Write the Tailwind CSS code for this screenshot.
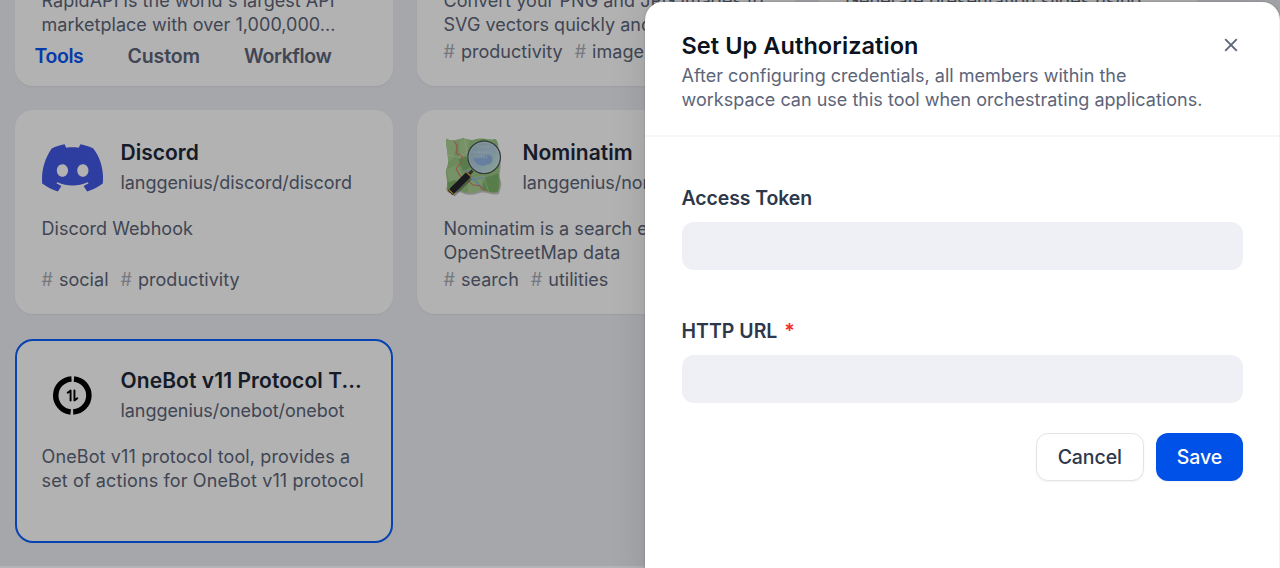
<!DOCTYPE html>
<html lang="en">
<head>
<meta charset="utf-8">
<title>Set Up Authorization</title>
<script src="https://cdn.jsdelivr.net/npm/@tailwindcss/browser@4"></script>
</head>
<body class="relative h-[568px] w-[1280px] overflow-hidden bg-[#edeff4] font-['Inter',sans-serif] text-[18px] leading-6 tracking-[0.03px] text-[#5c6579]">

<!-- Tool grid, scrolled down under the tabs -->
<main class="-mt-[118px] grid grid-cols-[377.5px_377.5px_377.5px] auto-rows-[204px] gap-x-[24.5px] gap-y-[24.3px] pl-[15px] whitespace-nowrap">
  <article class="flex flex-col rounded-[18px] bg-white px-[26.5px] pt-[106.5px] shadow-xs">
    <p>RapidAPI is the world's largest API<br>marketplace with over 1,000,000...</p>
  </article>
  <article class="flex flex-col rounded-[18px] bg-white px-[26.5px] pt-[106.5px] shadow-xs">
    <p>Convert your PNG and JPG images to<br>SVG vectors quickly and easily</p>
    <div class="mt-[3px] flex gap-3">
      <span class="flex gap-[6px]"><span class="text-[#a9adb6]">#</span>productivity</span>
      <span class="flex gap-[6px]"><span class="text-[#a9adb6]">#</span>image</span>
    </div>
  </article>
  <article class="flex flex-col rounded-[18px] bg-white px-[26.5px] pt-[106.5px] shadow-xs">
    <p>Generate presentation slides using</p>
  </article>

  <article class="flex flex-col rounded-[18px] bg-white px-[26.5px] pt-[26.5px] shadow-xs">
    <div class="flex h-20 gap-[18px]">
      <svg class="h-[61px] w-[61px]" viewBox="0 0 60 60">
        <path fill="#4358e6" d="M22.2 7.1c-4.6.8-8.700 2.200-12.700 4.100C2.500 21.500-.8 33.200.2 45.700c4.800 3.600 10 6.200 15.400 7.900l3.500-5.500-5-2.500 1.200-1c9.500 4.300 20 4.300 29.400 0l1.200 1-5 2.500 3.500 5.500c5.500-1.700 10.700-4.300 15.400-7.900 1.200-14.200-2.400-25.200-9.300-34.500-4-1.900-8.300-3.300-12.700-4.100l-1.700 3.400c-4.100-.6-8.200-.6-12.300 0zM20.100 39.200c-3 0-5.500-2.800-5.500-6.200s2.400-6.200 5.500-6.200 5.600 2.800 5.500 6.200c0 3.400-2.400 6.200-5.500 6.200zm20.100 0c-3 0-5.500-2.800-5.500-6.200s2.400-6.200 5.500-6.200 5.600 2.800 5.500 6.200c0 3.400-2.400 6.200-5.500 6.200z"/>
      </svg>
      <div class="pt-[2px]">
        <h3 class="text-[21px] leading-7 font-semibold text-[#1e293a]">Discord</h3>
        <p class="mt-1 tracking-[-0.05px]">langgenius/discord/discord</p>
      </div>
    </div>
    <p class="h-[51px]">Discord Webhook</p>
    <div class="flex gap-3">
      <span class="flex gap-[6px]"><span class="text-[#a9adb6]">#</span>social</span>
      <span class="flex gap-[6px]"><span class="text-[#a9adb6]">#</span>productivity</span>
    </div>
  </article>

  <article class="flex flex-col rounded-[18px] bg-white px-[26.5px] pt-[26.5px] shadow-xs">
    <div class="flex h-20 gap-[18px]">
      <svg class="h-[61px] w-[61px]" viewBox="0 0 60 60">
        <defs>
          <linearGradient id="lens" x1="0" y1="0" x2="1" y2="1"><stop offset="0" stop-color="#a3c5cb"/><stop offset=".5" stop-color="#b2cfe2"/><stop offset="1" stop-color="#c9ebd4"/></linearGradient>
          <clipPath id="map"><path d="M2.500 2C8 4.500 14 2.500 19 1c4 1 7 3 11 1.500 7-2.500 14 1 21-.5 4 5-1 11 2 17 4 7 0 13 1 20 3 6 0 11-1 15-8 2-12-3-19-1-6 2-11 3-17 0-5-2-10 2-15-1 3-8-1-13 0-20 3-6 2-12 1-18 0-5-2-8-.5-13z"/></clipPath>
        </defs>
        <path transform="translate(1 2)" fill="#000" opacity=".22" d="M2.500 2C8 4.500 14 2.500 19 1c4 1 7 3 11 1.500 7-2.500 14 1 21-.5 4 5-1 11 2 17 4 7 0 13 1 20 3 6 0 11-1 15-8 2-12-3-19-1-6 2-11 3-17 0-5-2-10 2-15-1 3-8-1-13 0-20 3-6 2-12 1-18 0-5-2-8-.5-13z"/>
        <g clip-path="url(#map)">
          <path fill="#9cc685" d="M0 0h60v60H0z"/>
          <path fill="#acd294" d="M0 0h13l-3 20-10 8zM15 3l10-2-2 18-8 5zM2 32l12-5 4 12-12 8zM25 40l14-2-4 16-12 2z"/>
          <path fill="#7fb46b" d="M25 10l14-9 6 5-12 12zM40 40l14-4v18l-12 2-4-6zM14 22l8-3 3 11-6 4zM3 45l8-3 4 9-11 4z"/>
          <path fill="none" stroke="#8fb6d4" stroke-width="1.600" d="M19 33c6 0 8 5 11 9s6 6 8 9M27 42c5 0 9-3 14-2"/>
          <path fill="none" stroke="#cf7c66" stroke-width="1.100" d="M10 4l3 5-1 7 6 3-1 6-5 6 3 6 4 5M24 43l4 4 7 1 6 6"/>
          <path fill="none" stroke="#d5e3bd" stroke-width=".5" d="M2 17l12 3 11-6M20 2l4 20M38 36l6 18"/>
        </g>
        <path stroke="#444" stroke-width="3" d="M28 33l-5 5"/>
        <path stroke="#000" stroke-opacity=".3" stroke-width="7" d="M25 39L8 56"/>
        <path stroke="#25262a" stroke-width="6.500" d="M24.500 36.500L6 55"/>
        <path stroke="#e1aa32" stroke-width="1.300" d="M22 34.500l4.500 4.500M4.500 51.500L9 56"/>
        <circle cx="39.500" cy="20" r="16" fill="url(#lens)" stroke="#50585a" stroke-width="1.300"/>
        <circle cx="39.500" cy="20" r="14.800" fill="none" stroke="#dcebea" stroke-width=".7" opacity=".7"/>
        <path fill="#88afe4" d="M29 21c5-3 8 0 12-3 5-2 8 2 6 7-2 3-5 1-7 3-5 1-10-2-11-7z" opacity=".8"/>
        <path d="M29 15h17M33 9.500h12M31 20h12" stroke="#d5e5ee" stroke-width="2" stroke-dasharray="1.500 1" opacity=".6"/>
      </svg>
      <div class="pt-[2px]">
        <h3 class="text-[21px] leading-7 font-semibold text-[#1e293a]">Nominatim</h3>
        <p class="mt-1 tracking-[-0.05px]">langgenius/nominatim</p>
      </div>
    </div>
    <p class="h-[51px]">Nominatim is a search engine for<br>OpenStreetMap data</p>
    <div class="flex gap-3">
      <span class="flex gap-[6px]"><span class="text-[#a9adb6]">#</span>search</span>
      <span class="flex gap-[6px]"><span class="text-[#a9adb6]">#</span>utilities</span>
    </div>
  </article>
  <div></div>

  <article class="flex flex-col rounded-[18px] border-2 border-[#0b60ff] bg-white px-[24.5px] pt-[24.5px]">
    <div class="flex h-20 gap-[18px]">
      <svg class="h-[61px] w-[61px]" viewBox="0 0 60 60">
        <g fill="none" stroke="#000">
          <path stroke-width="5.400" d="M29 13.700A16.300 16.300 0 0 0 28.200 46.200M31.400 13.700A16.300 16.300 0 0 1 30.700 46.200"/>
          <path stroke-width="1.900" stroke-linejoin="round" stroke-linecap="round" d="M25.300 27.300l2.800-2.100v9.800M31.900 25v9.800l2.800-2.100"/>
        </g>
      </svg>
      <div class="pt-[2px]">
        <h3 class="text-[21px] leading-7 font-semibold tracking-[0.08px] text-[#1e293a]">OneBot v11 Protocol T...</h3>
        <p class="mt-1 tracking-[-0.05px]">langgenius/onebot/onebot</p>
      </div>
    </div>
    <p class="tracking-[0.13px]">OneBot v11 protocol tool, provides a<br>set of actions for OneBot v11 protocol</p>
  </article>
</main>

<!-- Tabs float over the scrolled cards -->
<nav class="absolute top-[33px] left-0 flex h-[46px] items-center text-[19.5px] font-semibold tracking-normal">
  <span class="flex h-full w-[103px] items-center rounded-r-[12px] pl-[34.500px] tracking-[-0.4px] text-[#0b55f5]">Tools</span>
  <span class="w-[117px] pl-[24.5px] tracking-[-0.1px]">Custom</span>
  <span class="pl-6 tracking-[-0.4px]">Workflow</span>
</nav>

<div class="absolute inset-0 bg-black/30"></div>
<div class="absolute inset-x-0 bottom-0 h-[2px] bg-white/15"></div>

<!-- Authorization drawer -->
<aside class="absolute top-[1.5px] left-[644.5px] h-[590px] w-[635.5px] rounded-t-[18px] border-r border-[#f2f2f3] bg-white whitespace-nowrap shadow-[0_0_36px_rgba(0,0,0,0.12),0_0_2px_rgba(0,0,0,0.25)]">
  <header class="flex h-[135px] justify-between border-b-2 border-[#f7f7f8] pt-[28px] pr-[38px] pl-[37px]">
    <div>
      <h2 class="text-[23.5px] leading-8 font-semibold tracking-[0.08px] text-[#0b1220]">Set Up Authorization</h2>
      <p class="mt-[2px] tracking-[0.01px]">After configuring credentials, all members within the<br>workspace can use this tool when orchestrating applications.</p>
    </div>
    <svg class="mt-[5px] h-5 w-5" viewBox="0 0 20 20" fill="none" stroke="#5d667b" stroke-width="1.900"><path d="M4.200 4.200l11.600 11.600M15.800 4.200L4.200 15.800"/></svg>
  </header>
  <form class="pr-[36px] pl-[37px] pt-[47px] text-[19.5px] font-semibold tracking-normal text-[#2d384a]">
    <label class="block h-[38px] leading-7 tracking-[-0.1px]">Access Token</label>
    <div class="h-12 rounded-[12px] bg-[#eff0f5]"></div>
    <label class="mt-[47px] block h-[38px] leading-7">HTTP URL <span class="ml-[2px] text-[#f42c2c]">*</span></label>
    <div class="h-12 rounded-[12px] bg-[#eff0f5]"></div>
    <div class="mt-[30.5px] flex justify-end gap-3 font-medium">
      <button type="button" class="h-12 w-[108.500px] rounded-[12px] border border-[#e3e4e7] bg-white tracking-[-0.1px] shadow-xs">Cancel</button>
      <button type="button" class="h-12 w-[87px] rounded-[12px] bg-[#0051e8] text-white shadow-xs">Save</button>
    </div>
  </form>
</aside>
</body>
</html>
